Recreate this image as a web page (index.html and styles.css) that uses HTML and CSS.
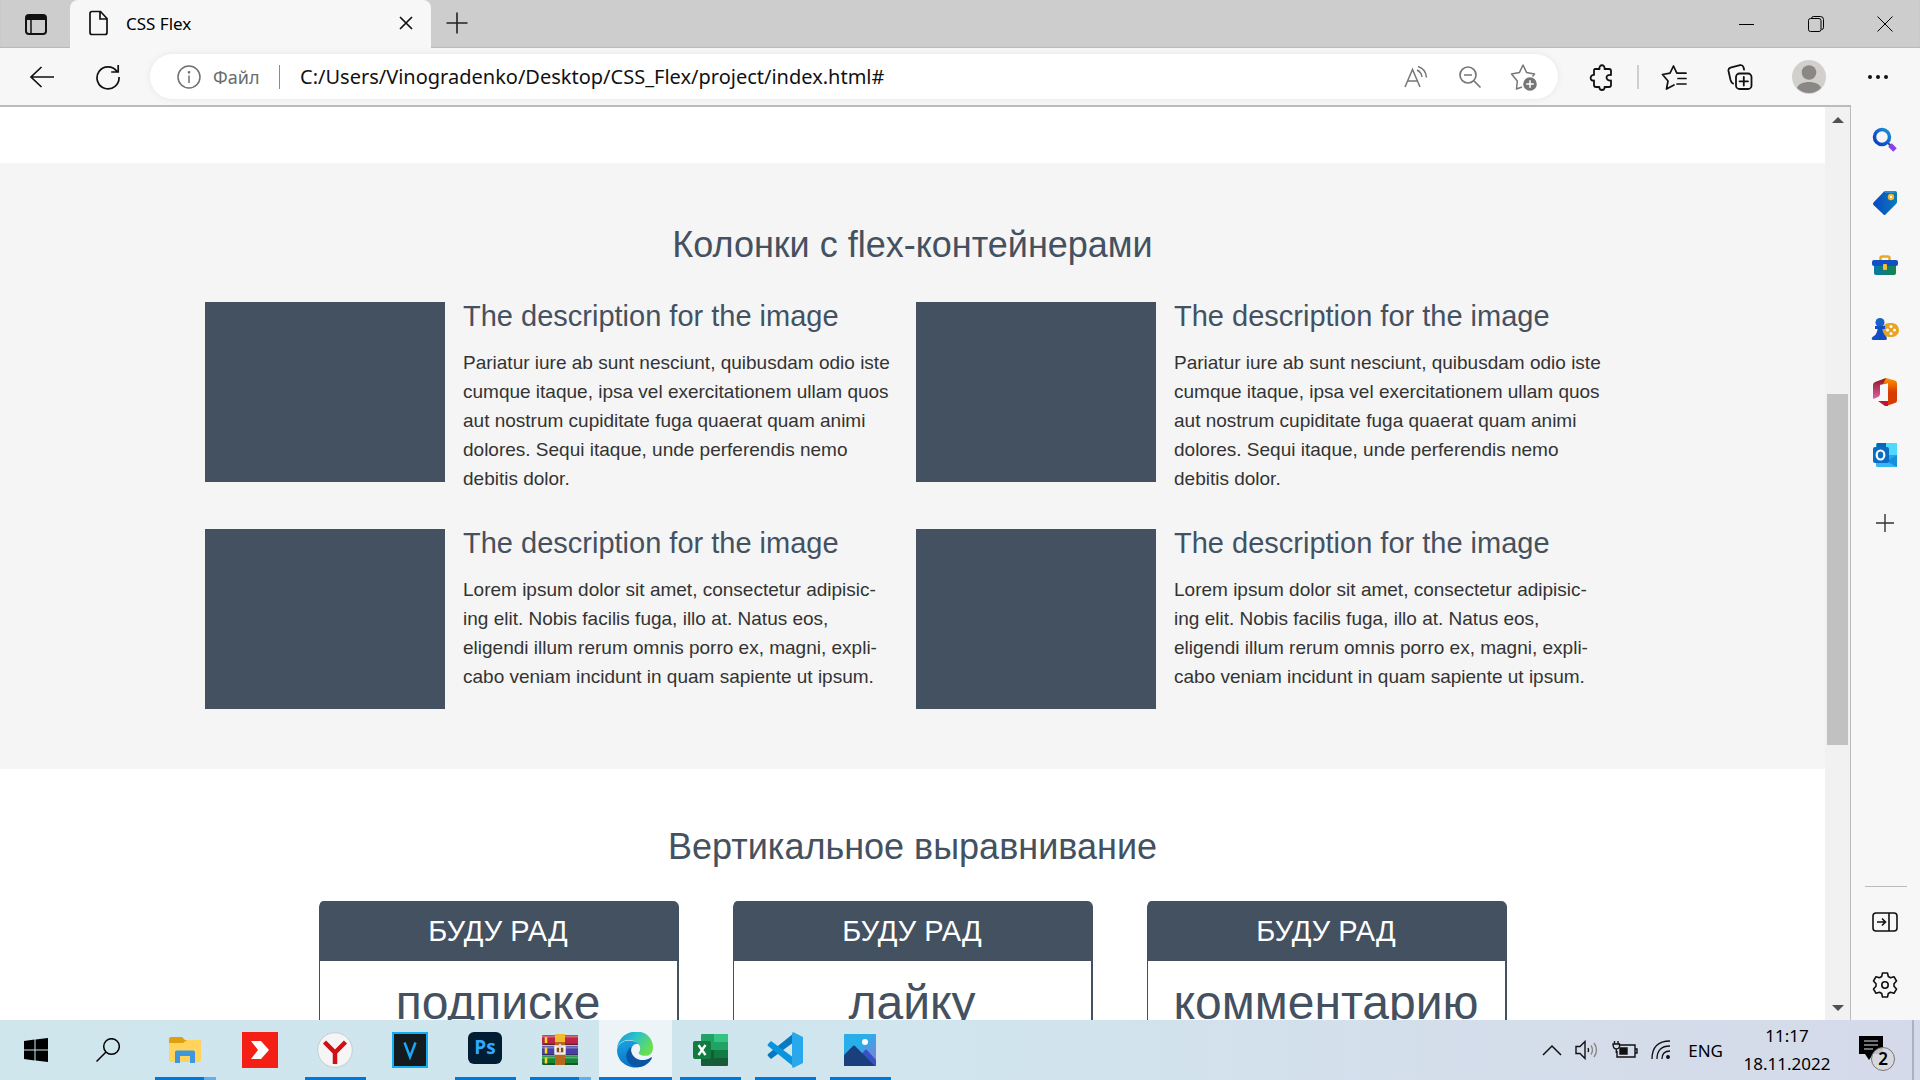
FILE: index.html
```html
<!DOCTYPE html>
<html lang="ru">
<head>
<meta charset="utf-8">
<meta name="viewport" content="width=device-width, initial-scale=1">
<title>CSS Flex</title>
<link rel="stylesheet" href="styles.css">
</head>
<body>
<header class="browser">
  <div class="tabstrip">
    <button class="tab-menu" aria-label="Tab actions">
      <svg width="24" height="24" viewBox="0 0 24 24" fill="none" stroke="#111" stroke-width="2"><rect x="2" y="3" width="20" height="19" rx="3"/><path d="M2 5.500h20" stroke-width="5"/><path d="M7 7v15" stroke-width="1.500"/></svg>
    </button>
    <div class="tab">
      <svg width="20" height="26" viewBox="0 0 20 26" fill="none" stroke="#111" stroke-width="1.700"><path d="M3 1.500h8.500l6.500 7v14a2 2 0 0 1-2 2H3a2 2 0 0 1-2-2v-19a2 2 0 0 1 2-2zM11 1.500V9h7"/></svg>
      <span class="tab-title">CSS Flex</span>
      <button class="tab-close" aria-label="Close tab"><svg width="14" height="14" viewBox="0 0 14 14" stroke="#111" stroke-width="1.700"><path d="M1 1l12 12M13 1L1 13"/></svg></button>
    </div>
    <button class="new-tab" aria-label="New tab"><svg width="22" height="22" viewBox="0 0 22 22" stroke="#222" stroke-width="1.600"><path d="M11 .5v21M.5 11h21"/></svg></button>
    <div class="window-controls">
      <button aria-label="Minimise"><svg width="16" height="16" viewBox="0 0 16 16" stroke="#000"><path d="M0 8.500h15"/></svg></button>
      <button aria-label="Restore"><svg width="16" height="16" viewBox="0 0 16 16" fill="none" stroke="#000"><rect x=".5" y="2.500" width="12.500" height="13" rx="2"/><path d="M3.500 2.500a2 2 0 0 1 2-2h7a3 3 0 0 1 3 3v8a2 2 0 0 1-2 2"/></svg></button>
      <button aria-label="Close"><svg width="16" height="16" viewBox="0 0 16 16" stroke="#000"><path d="M.5.5l15 15M15.500.5l-15 15"/></svg></button>
    </div>
  </div>
  <div class="toolbar">
    <button class="tool" aria-label="Back"><svg width="26" height="24" viewBox="0 0 26 24" fill="none" stroke="#111" stroke-width="1.700"><path d="M12.500 2L2 12l10.500 10M2 12h23"/></svg></button>
    <button class="tool" aria-label="Refresh"><svg width="26" height="26" viewBox="0 0 26 26" fill="none" stroke="#111" stroke-width="1.700"><path d="M22 7.500A11 11 0 1 0 24 13M23.200 1v7h-7"/></svg></button>
    <div class="omnibox">
      <svg width="24" height="24" viewBox="0 0 24 24" fill="none" stroke="#707070" stroke-width="1.500"><circle cx="12" cy="12" r="11"/><path d="M12 10.500V18"/><circle cx="12" cy="7.300" r=".6"/></svg>
      <label class="scheme" for="address">Файл</label>
      <span class="scheme-line"></span>
      <input id="address" class="address" type="text" value="C:/Users/Vinogradenko/Desktop/CSS_Flex/project/index.html#">
      <div class="omnibox-tools">
        <button class="tool" aria-label="Read aloud"><svg width="26" height="24" viewBox="0 0 26 24" fill="none" stroke="#777" stroke-width="1.500"><path d="M2 22L9.500 4.500 17 22M4.500 16h10M14 5a9 9 0 0 1 5 7M15 1.500c5 1.500 8 5.500 8.500 11"/></svg></button>
        <button class="tool" aria-label="Zoom out"><svg width="24" height="24" viewBox="0 0 24 24" fill="none" stroke="#777" stroke-width="1.700"><circle cx="10" cy="10" r="8"/><path d="M16 16l6.500 6.500M6 10h8"/></svg></button>
        <button class="tool" aria-label="Add to favourites"><svg width="28" height="28" viewBox="0 0 28 28" fill="none" stroke="#777" stroke-width="1.500" stroke-linejoin="round"><path d="M12 24l-5.500 2 .8-8L1.500 11l8-1.600L13 2l3.500 7.400 8 1.600-2 2.500"/><circle cx="20" cy="21" r="6.800" fill="#757575" stroke="none"/><path d="M20 17.200v7.600M16.200 21h7.600" stroke="#fff"/></svg></button>
      </div>
    </div>
    <button class="tool" aria-label="Extensions"><svg width="26" height="28" viewBox="0 0 26 28" fill="none" stroke="#111" stroke-width="1.800" stroke-linejoin="round"><path d="M6 6h4.500C9.500 1 16.500 1 15.500 6H20q2 0 2 2v4c-6-1-6 6 0 5.500V22q0 2-2 2h-4.500c1 4-6 4-5 0H7q-2 0-2-2v-4.500c-4.500 1-4.500-6 0-5.500V7.500Q5 6 6 6z"/></svg></button>
    <span class="tool-line"></span>
    <button class="tool" aria-label="Favourites"><svg width="26" height="26" viewBox="0 0 26 26" fill="none" stroke="#111" stroke-width="1.700" stroke-linejoin="round" stroke-linecap="round"><path d="M13 21l-7.500 4L7 17 1.500 10.500l7.500-1.300L12.500 2l3.300 7.200H25M17 14.500h8M16 20h9"/></svg></button>
    <button class="tool" aria-label="Collections"><svg width="26" height="26" viewBox="0 0 26 26" fill="none" stroke="#111" stroke-width="1.800" stroke-linecap="round"><rect x="9" y="9.500" width="15.500" height="15.500" rx="3.500"/><path d="M16.800 13v8.500M12.500 17.300H21M6 19.500c-2-1-2-2-2.600-4L1.500 7Q1 4.500 3.500 3.700L13 1.200q2.600-.5 3.500 2l.6 2.500"/></svg></button>
    <button class="profile" aria-label="Profile"><svg width="34" height="34" viewBox="0 0 34 34"><circle cx="17" cy="17" r="17" fill="#d2d0cd"/><circle cx="17" cy="12.500" r="7.300" fill="#8b8784"/><path d="M5 28c2-8 22-8 24 0a17 17 0 0 1-24 0z" fill="#8b8784"/></svg></button>
    <button class="tool" aria-label="More"><svg width="22" height="6" viewBox="0 0 22 6" fill="#111"><circle cx="3" cy="3" r="2"/><circle cx="11" cy="3" r="2"/><circle cx="19" cy="3" r="2"/></svg></button>
  </div>
</header>

<div class="workspace">
  <div class="viewport">
    <main class="page">
      <section class="previous"></section>
      <section class="columns">
        <h2 class="title">Колонки с flex-контейнерами</h2>
        <div class="media-grid">
          <article class="media"><div class="image"></div><div class="media-text"><h3>The description for the image</h3><p>Pariatur iure ab sunt nesciunt, quibusdam odio iste cumque itaque, ipsa vel exercitationem ullam quos aut nostrum cupiditate fuga quaerat quam animi dolores. Sequi itaque, unde perferendis nemo debitis dolor.</p></div></article>
          <article class="media"><div class="image"></div><div class="media-text"><h3>The description for the image</h3><p>Pariatur iure ab sunt nesciunt, quibusdam odio iste cumque itaque, ipsa vel exercitationem ullam quos aut nostrum cupiditate fuga quaerat quam animi dolores. Sequi itaque, unde perferendis nemo debitis dolor.</p></div></article>
          <article class="media"><div class="image"></div><div class="media-text"><h3>The description for the image</h3><p>Lorem ipsum dolor sit amet, consectetur adipisic&shy;ing elit. Nobis facilis fuga, illo at. Natus eos, eligendi illum rerum omnis porro ex, magni, expli&shy;cabo veniam incidunt in quam sapiente ut ipsum.</p></div></article>
          <article class="media"><div class="image"></div><div class="media-text"><h3>The description for the image</h3><p>Lorem ipsum dolor sit amet, consectetur adipisic&shy;ing elit. Nobis facilis fuga, illo at. Natus eos, eligendi illum rerum omnis porro ex, magni, expli&shy;cabo veniam incidunt in quam sapiente ut ipsum.</p></div></article>
        </div>
      </section>
      <section class="vertical">
        <h2 class="title">Вертикальное выравнивание</h2>
        <div class="cards">
          <article class="card"><h3>БУДУ РАД</h3><p>подписке</p></article>
          <article class="card"><h3>БУДУ РАД</h3><p>лайку</p></article>
          <article class="card"><h3>БУДУ РАД</h3><p>комментарию</p></article>
        </div>
      </section>
    </main>
    <div class="scrollbar">
      <svg width="12" height="6" viewBox="0 0 12 6" fill="#505050"><path d="M0 6l6-6 6 6z"/></svg>
      <div class="track"><span class="thumb"></span></div>
      <svg width="12" height="6" viewBox="0 0 12 6" fill="#505050"><path d="M0 0l6 6 6-6z"/></svg>
    </div>
  </div>
  <aside class="sidebar">
    <button aria-label="Search"><svg width="26" height="26" viewBox="0 0 26 26" fill="none"><defs><linearGradient id="ring" x1="1" y1="0" x2="0" y2="1"><stop stop-color="#1a9ad0"/><stop offset=".5" stop-color="#1260cf"/><stop offset="1" stop-color="#0a3dc0"/></linearGradient></defs><path d="M16 16l3 3" stroke="#444" stroke-width="2"/><path d="M18 18l5 5" stroke="#8a3ff0" stroke-width="5"/><circle cx="10" cy="10" r="7.500" stroke="url(#ring)" stroke-width="3.500"/></svg></button>
    <button aria-label="Shopping"><svg width="26" height="26" viewBox="0 0 26 26"><defs><linearGradient id="tag"><stop stop-color="#0b45c5"/><stop offset="1" stop-color="#0a7db8"/></linearGradient></defs><path d="M12 1.500Q13 1 14 1h9q2 0 2 2v9q0 1-1 2L13.500 24.500q-1 1-2 0L1.500 15q-1-1 0-2.500z" fill="url(#tag)"/><path d="M13 2h10" stroke="#42b5ed"/><circle cx="19" cy="7" r="2.200" fill="#fff" stroke="#f5b52c" stroke-width="2"/></svg></button>
    <button aria-label="Tools"><svg width="26" height="22" viewBox="0 0 26 22"><defs><linearGradient id="case"><stop stop-color="#0878aa"/><stop offset="1" stop-color="#138548"/></linearGradient></defs><path d="M8.500 6V3q0-1.500 2-1.500h5q2 0 2 1.500v3" fill="none" stroke="#eca91f" stroke-width="2.500"/><path d="M2 9h22v9q0 2-2 2H4q-2 0-2-2z" fill="url(#case)"/><rect y="5" width="26" height="6" rx="2" fill="#124fc4"/><rect x="11" y="9" width="4" height="6" rx="1" fill="#ffbd2d"/></svg></button>
    <button aria-label="Games"><svg width="28" height="24" viewBox="0 0 28 24"><rect x="11" y="6" width="17" height="14" rx="7" fill="#e9a323"/><g fill="#fff"><circle cx="20" cy="9.500" r="1.500"/><circle cx="20" cy="16.500" r="1.500"/><circle cx="16.500" cy="13" r="1.500"/><circle cx="23.500" cy="13" r="1.500"/></g><circle cx="9" cy="5.500" r="4.500" fill="#1763ca"/><path d="M4 9h10v3h-2.500q0 4 4 8 1 3-1 3h-12q-3 0-1-3 5-3 5-8H4z" fill="#134dc4"/></svg></button>
    <button aria-label="Office"><svg width="26" height="30" viewBox="0 0 26 30"><defs><linearGradient id="office" x2="0" y2="1"><stop stop-color="#ff9700"/><stop offset=".5" stop-color="#d83b01"/></linearGradient><linearGradient id="office-left" x2="0" y2="1"><stop stop-color="#8b1520"/><stop offset="1" stop-color="#e25faa"/></linearGradient></defs><path d="M14 1L3 5Q1 6 1 8v14l5-2q2-1 2-3V8l8-2z" fill="url(#office-left)"/><path d="M14 1l9 2.500q2 .5 2 3v17q0 2-2 2.500L14 29l2-5V6l-5 1z" fill="url(#office)"/><path d="M6 24h10v5h-3z" fill="#c31433"/></svg></button>
    <button aria-label="Outlook"><svg width="26" height="26" viewBox="0 0 26 26"><path d="M5 1h18q2 0 2 2v22H6q-2 0-2-2V2z" fill="#28a8ea"/><path d="M14 1h11v12H14z" fill="#50d9ff"/><path d="M14 1h-9v6h9z" fill="#0a65b5"/><path d="M4 15l21 10H6q-2 0-2-2z" fill="#35b8f1"/><path d="M25 13v12l-10-6z" fill="#1490df"/><rect y="5" x="1" width="16" height="16" rx="2" fill="#0a6cc4"/><ellipse cx="8.500" cy="13" rx="3.800" ry="4.500" fill="none" stroke="#fff" stroke-width="2.200"/></svg></button>
    <button class="add" aria-label="Add"><svg width="20" height="20" viewBox="0 0 20 20" stroke="#333" stroke-width="1.400"><path d="M10 1v18M1 10h18"/></svg></button>
    <span class="side-line"></span>
    <button aria-label="Hide sidebar"><svg width="26" height="20" viewBox="0 0 26 20" fill="none" stroke="#111" stroke-width="1.600"><rect x="1" y="1" width="24" height="18" rx="3"/><path d="M17 1v18M5 10h8M10 6.500l3.500 3.500-3.500 3.500"/></svg></button>
    <button aria-label="Settings"><svg width="26" height="26" viewBox="0 0 26 26" fill="none" stroke="#111" stroke-width="1.600" stroke-linejoin="round"><circle cx="13" cy="13" r="3.200"/><path d="M10.500 1h5l.8 3.500 2.200 1.200 3.500-1L24.500 9 22 11.700v2.600l2.500 2.700-2.500 4.300-3.500-1-2.200 1.200-.8 3.500h-5l-.8-3.500-2.200-1.200-3.500 1L1.500 17 4 14.300v-2.600L1.500 9 4 4.700l3.500 1 2.200-1.200z"/></svg></button>
  </aside>
</div>

<footer class="taskbar">
  <button class="system" aria-label="Start"><svg width="24" height="24" viewBox="0 0 24 24"><path d="M0 3l10.500-1.500v10H0zM11.500 1.400L24 0v11.500H11.500zM0 12.500h10.500v10L0 21zM11.500 12.500H24V24l-12.500-1.500z"/></svg></button>
  <button class="system" aria-label="Search"><svg width="24" height="24" viewBox="0 0 24 24" fill="none" stroke="#000" stroke-width="1.500"><circle cx="15.500" cy="8.500" r="7.800"/><path d="M10 14L.5 23.500"/></svg></button>
  <nav class="apps">
    <button class="app open stacked" aria-label="Explorer"><svg width="36" height="36" viewBox="0 0 36 36"><path d="M2 8q0-3 2-3h11l3 3h14q2 0 2 2v4H2z" fill="#dea010"/><path d="M2 11h14l4-3h12q2 0 2 2v18q0 2-2 2H4q-2 0-2-2z" fill="#ffd35c"/><path d="M8 31V20q0-1.500 2-1.500h16q2 0 2 1.500v11h-5v-7H13v7z" fill="#3d97dd"/></svg></button>
    <button class="app" aria-label="Remote"><svg width="36" height="36" viewBox="0 0 36 36"><path fill="#f52015" d="M0 0h36v36H0z"/><path d="M9 9h10l8 9-8 9H9l7-9z" fill="#fff"/></svg></button>
    <button class="app open" aria-label="Yandex"><svg width="36" height="36" viewBox="0 0 36 36"><circle cx="18" cy="18" r="17.300" fill="#f5f5f5" stroke="#c4cdd0"/><path d="M7.500 10L18 20.500 28.500 10M18 19v13" fill="none" stroke="#cf1016" stroke-width="4.500"/></svg></button>
    <button class="app" aria-label="Vegas"><svg width="36" height="36" viewBox="0 0 36 36"><path d="M1 1h34v34H1z" fill="#151a1e" stroke="#13aef0" stroke-width="2"/><path d="M12.500 10.500L18 25l5.500-14.500" fill="none" stroke="#19a9f5" stroke-width="2.500"/></svg></button>
    <button class="app open" aria-label="Photoshop"><span class="ps">Ps</span></button>
    <button class="app open stacked" aria-label="WinRAR"><svg width="36" height="36" viewBox="0 0 36 36"><path d="M0 4q0-1 1-1h35v10H2q-2 0-2-2z" fill="#bd2445"/><path d="M0 14h36v9H0z" fill="#4841a5"/><path d="M0 24h36v9H3q-3 0-3-2z" fill="#138535"/><path d="M0 4.500h36M0 15.500h36M0 25.500h36" stroke="#fff" opacity=".3" stroke-width="2"/><path d="M0 12.500h36M0 23h36M0 32h36" stroke="#222" opacity=".6" stroke-width="1.500"/><path d="M4 5v6M4 15.500v6M4 25.500v6" stroke="#ffd529" stroke-width="2.500"/><path d="M13 2h10v31H13z" fill="#b9671c"/><path d="M13 2h10v8H13z" fill="#efba2c"/><path d="M13.500 14.500h9v7h-9z" fill="#8b460e" stroke="#eee" stroke-width="2.500"/><path d="M18 12v8" stroke="#d9d9d9" stroke-width="2"/></svg></button>
    <button class="app open active" aria-label="Edge"><svg width="36" height="36" viewBox="0 0 36 36"><defs><linearGradient id="edge-top" y2=".5"><stop stop-color="#1492d5"/><stop offset=".5" stop-color="#2cc3cb"/><stop offset="1" stop-color="#67df50"/></linearGradient><linearGradient id="edge-left" x2=".3" y2="1"><stop stop-color="#1ba5df"/><stop offset="1" stop-color="#0872ca"/></linearGradient></defs><path d="M0 17C2-5 35-7 36 15c0 9-7 10-12 8-5-2 0-2-1-8C20 6 3 5 0 17z" fill="url(#edge-top)"/><path d="M0 18C2 6 17 7 22 12c-6-2-9 5-8 10 2 8 10 13 16 9-5 5-12 5-16 4C6 33 0 27 0 18z" fill="url(#edge-left)"/><path d="M14 15c-8 6-5 17 4 20 8 1 14-3 17-9 0-1-1-1-2 0-8 5-20 1-19-11z" fill="#0c55a4"/></svg></button>
    <button class="app open" aria-label="Excel"><svg width="36" height="36" viewBox="0 0 36 36"><path d="M10 2h25q1 0 1 1v30q0 1-1 1H10q-1 0-1-1V3q0-1 1-1z" fill="#21a366"/><path d="M22 2h13l1 1v7H22z" fill="#33c481"/><path d="M9 18h13v8H9z" fill="#185c37"/><path d="M22 18h14v8H22z" fill="#107c41"/><path d="M9 26h27v7l-1 1H10l-1-1z" fill="#185c37"/><rect y="9" x="1" width="18" height="18" rx="2" fill="#107c41"/><path d="M6.500 13l7 10M13.500 13l-7 10" stroke="#fff" stroke-width="2.300"/></svg></button>
    <button class="app open" aria-label="Visual Studio Code"><svg width="36" height="36" viewBox="0 0 36 36"><path d="M27 1v9L4 27l-3-3q-1-1 0-2z" fill="#0879bf"/><path d="M1 12l3-3 23 17v9L1 14q-1-1 0-2z" fill="#0995dd"/><path d="M26 0l10 5v26l-10 5q-1-1-1-2V2q0-1 1-2z" fill="#29a8ec"/></svg></button>
    <button class="app open" aria-label="Photos"><svg width="36" height="36" viewBox="0 0 36 36"><defs><linearGradient id="sky" x2="1" y2="1"><stop offset=".4" stop-color="#28afea"/><stop offset="1" stop-color="#9873d0"/></linearGradient></defs><rect x="2" y="2" width="32" height="32" rx="1" fill="url(#sky)"/><path d="M18 24l5-6q1-1 2 0l9 10v6H20z" fill="#3653c6"/><path d="M2 23L11 14q1-1 2 0l20 20H2z" fill="#193f7c"/><circle cx="23" cy="10" r="3" fill="#fff"/></svg></button>
  </nav>
  <div class="tray">
    <svg width="20" height="12" viewBox="0 0 20 12" fill="none" stroke="#111" stroke-width="1.500"><path d="M1 11l9-9 9 9"/></svg>
    <svg width="24" height="20" viewBox="0 0 24 20" fill="none" stroke="#111" stroke-width="1.400"><path d="M1 6.500h4l5-5v17l-5-5H1zM13 8q1 2 0 4"/><path d="M16 5.500q3 4.500 0 9M19 3q5 7 0 14" stroke="#888"/></svg>
    <svg width="26" height="20" viewBox="0 0 26 20" fill="none" stroke="#111" stroke-width="1.400"><path d="M8 5h15v12H5v-6M23 9h2v4h-2M2.500 1v3M6 1v3M1 4h6.500v3q-1 2-3.200 2Q1 9 1 4zM4.300 9v4"/><path d="M8 8h7v6H8z" fill="#111"/></svg>
    <svg width="20" height="20" viewBox="0 0 20 20" fill="none" stroke="#111" stroke-width="1.300"><path d="M1 19Q1 1 19 1M6 19Q6 6 19 6M11 19q0-8 8-8"/><circle cx="17" cy="17" r="1.300" fill="#111"/></svg>
    <span class="language">ENG</span>
    <time class="clock"><span>11:17</span><span>18.11.2022</span></time>
    <button class="notices" aria-label="Notifications"><svg width="24" height="24" viewBox="0 0 24 24"><path d="M0 0h24v18H14l-4 6-4-6H0z"/><path d="M5 5h14M5 9h14M5 13h9" stroke="#dbe1ec" stroke-width="1.200"/></svg><span class="badge">2</span></button>
  </div>
  <span class="desktop-line"></span>
</footer>
</body>
</html>
```
FILE: styles.css
```css
* { box-sizing: border-box; }

body {
  margin: 0;
  height: 100vh;
  display: flex;
  flex-direction: column;
  overflow: hidden;
  background: #fff;
  font-family: "Liberation Sans", Arial, sans-serif;
}

h2, h3, p { margin: 0; font-weight: 400; }

button {
  display: flex;
  align-items: center;
  justify-content: center;
  padding: 0;
  border: 0;
  background: none;
  font: inherit;
}

svg { display: block; flex: none; }

/* Browser frame */
.browser { flex: none; font-family: "Noto Sans", sans-serif; }

.tabstrip {
  display: flex;
  height: 48px;
  background: #cdcdcd;
  box-shadow: inset 0 -1px 1px #b8b8b8;
}

.tab-menu { width: 72px; margin-right: -2px; padding-bottom: 1px; }

.tab {
  display: flex;
  align-items: center;
  width: 361px;
  padding: 0 13px 2px 19px;
  border-radius: 8px 8px 0 0;
  background: #f7f7f7;
}

.tab-title { flex: 1; padding-left: 17px; font-size: 17px; }
.tab-close { width: 24px; height: 24px; }
.new-tab { width: 40px; margin-left: 6px; padding-bottom: 2px; }
.window-controls { display: flex; margin-left: auto; }
.window-controls button { width: 69px; padding: 0 1px 1px 0; }

.toolbar {
  display: flex;
  align-items: center;
  gap: 22px;
  height: 57px;
  padding: 0 20px;
  background: #f7f7f7;
}

.tool { flex: none; width: 44px; height: 44px; }
.profile { flex: none; width: 50px; height: 44px; }
.tool-line { width: 2px; height: 24px; margin: 0 -9px; background: #cfcfcf; }

.omnibox {
  display: flex;
  flex: 1;
  align-items: center;
  height: 45px;
  min-width: 0;
  margin-left: -2px;
  padding: 0 12px 0 27px;
  border-radius: 23px;
  background: #fff;
  box-shadow: 0 0 6px #e6e6e6;
}

.scheme { width: 66px; padding-left: 12px; color: #6b6b6b; font-size: 18px; box-sizing: content-box; }
.scheme-line { width: 1px; height: 24px; background: #8a8a8a; }

.address {
  flex: 1;
  min-width: 0;
  padding: 0 0 0 20px;
  border: 0;
  outline: 0;
  background: none;
  color: #111;
  font: 20px "Noto Sans", sans-serif;
}

.omnibox-tools { display: flex; gap: 10px; }

/* Area below the toolbar */
.workspace { display: flex; flex: 1; min-height: 0; background: #f7f7f7; }

.viewport {
  display: flex;
  flex: 1;
  min-width: 0;
  border-top: 2px solid #bbb;
  border-right: 1px solid #bbb;
}

.page { flex: 1; min-width: 0; overflow: hidden; background: #fff; color: #333; }
.previous { height: 56px; }
.columns { padding: 60px 24px; background: #f5f5f5; }
.vertical { padding: 56px 24px; }

.title {
  color: #445161;
  font-size: 36px;
  line-height: 43px;
  text-align: center;
}

.media-grid {
  display: grid;
  grid-template-columns: 1fr 1fr;
  gap: 36px 7px;
  max-width: 1415px;
  margin: 36px auto 0;
}

.media { display: flex; align-items: flex-start; gap: 18px; }
.image { flex: none; width: 240px; height: 180px; background: #445161; }
.media-text { flex: 1; padding-right: 16px; }
.media-text h3 { color: #445161; font-size: 29px; line-height: 29px; }
.media-text p { margin-top: 17px; font-size: 19px; line-height: 29px; }

.cards { display: flex; justify-content: center; gap: 54px; margin-top: 33px; }

.card {
  width: 360px;
  border: 1px solid #445161;
  border-width: 0 2px 2px 1px;
  border-radius: 6px;
  color: #445161;
  text-align: center;
}

.card h3 {
  background: #445161;
  border-radius: 4px 4px 0 0;
  color: #fff;
  font-size: 29px;
  line-height: 60px;
}

.card p { padding: 12px 0; font-size: 48px; line-height: 60px; }

.scrollbar {
  display: flex;
  flex-direction: column;
  align-items: center;
  width: 25px;
  padding: 10px 0 9px;
  background: #f1f1f1;
}

.track { flex: 1; padding-top: 271px; }
.thumb { display: block; width: 21px; height: 42.500%; min-height: 351px; background: #c1c1c1; }

.sidebar {
  display: flex;
  flex-direction: column;
  align-items: center;
  width: 69px;
  padding: 3px 0 4px;
}

.sidebar button { width: 69px; height: 63px; padding-right: 1px; }
.sidebar .add { margin-top: 5px; }
.side-line { width: 42px; height: 1px; margin: auto 0 3px; background: #bbb; }

/* Taskbar */
.taskbar {
  display: flex;
  flex: none;
  height: 60px;
  background: linear-gradient(90deg, #cfe6ed, #d0e5ee 50%, #d4deeb 75%, #d4dae9);
  font-family: "Noto Sans", sans-serif;
}

.system { width: 72px; }
.apps { display: flex; gap: 2px; margin-left: 5px; }
.app { width: 73px; padding: 0 1px 1px 0; }
.open { background: linear-gradient(#0078d7, #0078d7) center bottom / 61px 3px no-repeat; }
.stacked { background-image: linear-gradient(90deg, #0078d7 49px, #66aee7 49px); }
.active { background-color: #edf4f8; background-size: 100% 3px; }

.ps {
  width: 34px;
  height: 32px;
  margin-bottom: 3px;
  border-radius: 6px;
  background: #001d33;
  color: #31a8ff;
  font: 700 19px/30px "Open Sans", sans-serif;
}

.tray { display: flex; align-items: center; gap: 13px; margin-left: auto; }
.language { padding: 0 6px 0 4px; font-size: 17px; }

.clock {
  display: flex;
  flex-direction: column;
  width: 90px;
  font-size: 17px;
  line-height: 28px;
  text-align: center;
}

.notices { position: relative; width: 24px; height: 24px; margin: 0 29px 4px 14px; }

.badge {
  position: absolute;
  left: 12px;
  top: 11px;
  width: 24px;
  height: 24px;
  border: 1px solid #777;
  border-radius: 50%;
  background: rgb(216 216 218 / 90%);
  font-size: 17px;
  font-weight: 600;
  line-height: 22px;
}

.desktop-line { width: 2px; margin-right: 6px; background: #aab3c4; }
```
